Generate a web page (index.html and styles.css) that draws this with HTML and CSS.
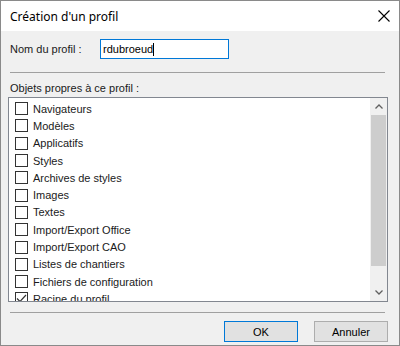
FILE: index.html
```html
<!DOCTYPE html>
<html lang="fr">
<head>
  <meta charset="UTF-8" />
  <title>Création d'un profil</title>
  <link rel="stylesheet" href="styles.css">
</head>
<body>

  <div class="dialog">
    <div class="titlebar">
      <span class="title">Création d'un profil</span>
      <svg class="close" width="12" height="12" viewBox="0 0 12 12">
        <path d="M0.5 0.5 L11.5 11.5 M11.5 0.5 L0.5 11.5" stroke="#000" stroke-width="1.1" fill="none" />
      </svg>
    </div>

    <div class="content">
      <div class="name-row">
        <label class="label">Nom du profil :</label>
        <div class="input">rdubroeud<span class="caret"></span></div>
      </div>

      <div class="sep first"></div>

      <div class="label objects">Objets propres à ce profil :</div>

      <div class="listbox">
        <ul class="items">
          <li><span class="box"></span>Navigateurs</li>
          <li><span class="box"></span>Modèles</li>
          <li><span class="box"></span>Applicatifs</li>
          <li><span class="box"></span>Styles</li>
          <li><span class="box"></span>Archives de styles</li>
          <li><span class="box"></span>Images</li>
          <li><span class="box"></span>Textes</li>
          <li><span class="box"></span>Import/Export Office</li>
          <li><span class="box"></span>Import/Export CAO</li>
          <li><span class="box"></span>Listes de chantiers</li>
          <li><span class="box"></span>Fichiers de configuration</li>
          <li><span class="box checked"><svg width="11" height="11" viewBox="0 0 11 11"><path d="M1 5.5 L4 8.5 L10 2" stroke="#333" stroke-width="1.2" fill="none" /></svg></span>Racine du profil</li>
        </ul>
        <div class="scrollbar">
          <div class="arrow">
            <svg width="8" height="5" viewBox="0 0 8 5"><path d="M0.5 4.5 L4 1 L7.5 4.5" stroke="#606060" stroke-width="1.3" fill="none" /></svg>
          </div>
          <div class="track">
            <div class="thumb"></div>
          </div>
          <div class="arrow">
            <svg width="8" height="5" viewBox="0 0 8 5"><path d="M0.5 0.5 L4 4 L7.5 0.5" stroke="#606060" stroke-width="1.3" fill="none" /></svg>
          </div>
        </div>
      </div>

      <div class="sep second"></div>

      <div class="buttons">
        <button class="btn default">OK</button>
        <button class="btn">Annuler</button>
      </div>
    </div>
  </div>

</body>
</html>
```

FILE: styles.css
```css
* {
  margin: 0;
  padding: 0;
  box-sizing: border-box;
}

html, body {
  width: 400px;
  height: 346px;
  background-color: #f0f0f0;
  font-family: 'Liberation Sans', Arial, sans-serif;
  font-size: 11px;
  color: #000;
}

.dialog {
  width: 400px;
  height: 346px;
  border: 1px solid #8a8a8a;
  background-color: #f0f0f0;
  display: flex;
  flex-direction: column;
}

.titlebar {
  height: 30px;
  background-color: #fff;
  display: flex;
  align-items: center;
  justify-content: space-between;
  padding: 0 8px 0 9px;
}

.title {
  font-family: 'Noto Sans', 'Open Sans', sans-serif;
  font-size: 12px;
  color: #000;
}

.close {
  margin-right: 1px;
}

.content {
  flex: 1;
  display: flex;
  flex-direction: column;
  padding: 8px 10px 0 7px;
}

.name-row {
  display: flex;
  align-items: center;
  padding-left: 2px;
}

.label {
  width: 90px;
  line-height: 13px;
  color: #1a1a1a;
}

.input {
  width: 129px;
  height: 20px;
  border: 1px solid #0078d7;
  background-color: #fff;
  padding: 0 0 0 2px;
  line-height: 18px;
  display: flex;
  align-items: center;
}

.caret {
  width: 1px;
  height: 13px;
  background-color: #000;
}

.sep {
  height: 1px;
  background-color: #a0a0a0;
  margin-left: 2px;
  margin-right: 4px;
}

.sep.first {
  margin-top: 13px;
}

.objects {
  width: auto;
  padding-left: 2px;
  margin-top: 9px;
  margin-bottom: 2px;
}

.listbox {
  height: 205px;
  border: 1px solid #828790;
  background-color: #fff;
  display: flex;
  margin-right: 1px;
}

.items {
  flex: 1;
  list-style: none;
  overflow: hidden;
  padding-top: 2px;
  color: #1a1a1a;
}

.items li {
  height: 17.3px;
  display: flex;
  align-items: center;
  padding-left: 6px;
  white-space: nowrap;
  flex-shrink: 0;
}

.box {
  width: 13px;
  height: 13px;
  border: 1px solid #333;
  background-color: #fff;
  margin-right: 5px;
  display: flex;
  align-items: center;
  justify-content: center;
  flex-shrink: 0;
}

.scrollbar {
  width: 17px;
  display: flex;
  flex-direction: column;
  background-color: #f0f0f0;
}

.arrow {
  height: 17px;
  display: flex;
  align-items: center;
  justify-content: center;
}

.track {
  flex: 1;
  display: flex;
  flex-direction: column;
}

.thumb {
  height: 151px;
  margin: 0 1px;
  background-color: #cdcdcd;
}

.sep.second {
  margin-top: 10px;
}

.buttons {
  display: flex;
  justify-content: flex-end;
  gap: 16px;
  margin-top: 8px;
  padding-right: 1px;
}

.btn {
  width: 74px;
  height: 21px;
  border: 1px solid #adadad;
  background-color: #e1e1e1;
  font-family: 'Liberation Sans', Arial, sans-serif;
  font-size: 11px;
  color: #000;
}

.btn.default {
  border: 1px solid #0078d7;
  box-shadow: inset 0 0 0 1px #e1e1e1;
}
```
